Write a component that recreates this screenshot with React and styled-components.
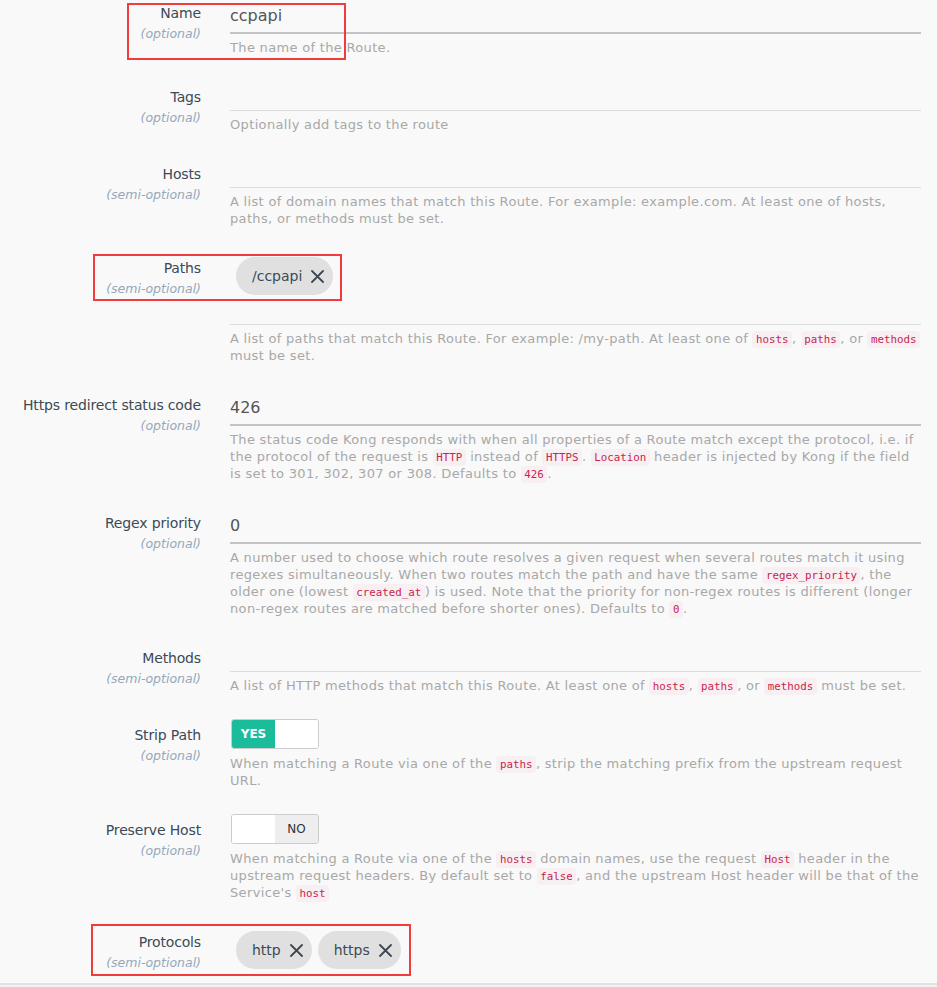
import styled, { createGlobalStyle } from "styled-components";

const GlobalStyle = createGlobalStyle`
  body {
    margin: 0;
    background: #f1f1f1;
    font-family: "DejaVu Sans", "Open Sans", sans-serif;
  }
`;

const Cross = () => (
  <svg width="13" height="13" viewBox="0 0 13 13">
    <path d="M1 1L12 12M12 1L1 12" stroke="#3d4852" strokeWidth="1.8" strokeLinecap="round" />
  </svg>
);

const App = () => {
  return (
    <>
      <GlobalStyle />
      <Panel>
        <Row>
          <LabelCol>
            <Label>Name</Label>
            <Hint>(optional)</Hint>
          </LabelCol>
          <Field>
            <TextValue>ccpapi</TextValue>
            <Help>The name of the Route.</Help>
          </Field>
          <Highlight $left={127} $top={0} $width={219} $height={57} />
        </Row>

        <Row>
          <LabelCol>
            <Label>Tags</Label>
            <Hint>(optional)</Hint>
          </LabelCol>
          <Field>
            <TagLine />
            <Help>Optionally add tags to the route</Help>
          </Field>
        </Row>

        <Row>
          <LabelCol>
            <Label>Hosts</Label>
            <Hint>(semi-optional)</Hint>
          </LabelCol>
          <Field>
            <TagLine />
            <Help>
              A list of domain names that match this Route. For example: example.com. At least one of hosts,
              paths, or methods must be set.
            </Help>
          </Field>
        </Row>

        <Row>
          <LabelCol>
            <Label>Paths</Label>
            <Hint>(semi-optional)</Hint>
          </LabelCol>
          <Field>
            <Chips>
              <Chip>
                /ccpapi <Cross />
              </Chip>
            </Chips>
            <TagLine />
            <Help>
              A list of paths that match this Route. For example: /my-path. At least one of <Code>hosts</Code>,{" "}
              <Code>paths</Code>, or <Code>methods</Code> must be set.
            </Help>
          </Field>
          <Highlight $left={93} $top={-4} $width={249} $height={47} />
        </Row>

        <Row>
          <LabelCol>
            <Label>Https redirect status code</Label>
            <Hint>(optional)</Hint>
          </LabelCol>
          <Field>
            <TextValue>426</TextValue>
            <Help>
              The status code Kong responds with when all properties of a Route match except the protocol, i.e. if
              the protocol of the request is <Code>HTTP</Code> instead of <Code>HTTPS</Code>.{" "}
              <Code>Location</Code> header is injected by Kong if the field is set to 301, 302, 307 or 308.
              Defaults to <Code>426</Code>.
            </Help>
          </Field>
        </Row>

        <Row>
          <LabelCol>
            <Label>Regex priority</Label>
            <Hint>(optional)</Hint>
          </LabelCol>
          <Field>
            <TextValue>0</TextValue>
            <Help>
              A number used to choose which route resolves a given request when several routes match it using
              regexes simultaneously. When two routes match the path and have the same <Code>regex_priority</Code>,
              the older one (lowest <Code>created_at</Code>) is used. Note that the priority for non-regex routes is
              different (longer non-regex routes are matched before shorter ones). Defaults to <Code>0</Code>.
            </Help>
          </Field>
        </Row>

        <Row>
          <LabelCol>
            <Label>Methods</Label>
            <Hint>(semi-optional)</Hint>
          </LabelCol>
          <Field>
            <TagLine />
            <Help>
              A list of HTTP methods that match this Route. At least one of <Code>hosts</Code>,{" "}
              <Code>paths</Code>, or <Code>methods</Code> must be set.
            </Help>
          </Field>
        </Row>

        <Row>
          <LabelCol>
            <Label>Strip Path</Label>
            <Hint>(optional)</Hint>
          </LabelCol>
          <Field>
            <Toggle>
              <ToggleHalf $on>YES</ToggleHalf>
              <ToggleHalf />
            </Toggle>
            <Help>
              When matching a Route via one of the <Code>paths</Code>, strip the matching prefix from the upstream
              request URL.
            </Help>
          </Field>
        </Row>

        <Row>
          <LabelCol>
            <Label>Preserve Host</Label>
            <Hint>(optional)</Hint>
          </LabelCol>
          <Field>
            <Toggle>
              <ToggleHalf />
              <ToggleHalf $off>NO</ToggleHalf>
            </Toggle>
            <Help>
              When matching a Route via one of the <Code>hosts</Code> domain names, use the request{" "}
              <Code>Host</Code> header in the upstream request headers. By default set to <Code>false</Code>, and
              the upstream Host header will be that of the Service's <Code>host</Code>
            </Help>
          </Field>
        </Row>

        <Row>
          <LabelCol>
            <Label>Protocols</Label>
            <Hint>(semi-optional)</Hint>
          </LabelCol>
          <Field>
            <Chips>
              <Chip>
                http <Cross />
              </Chip>
              <Chip>
                https <Cross />
              </Chip>
            </Chips>
            <TagLine />
          </Field>
          <Highlight $left={91} $top={-8} $width={320} $height={52} />
        </Row>
      </Panel>
    </>
  );
};

export default App;

const Panel = styled.div`
  box-sizing: border-box;
  height: 985px;
  overflow: hidden;
  background: #f9f9f9;
  border-bottom: 2px solid #e2e2e2;
  padding: 3px 16px 0 0;
`;

const Row = styled.div`
  position: relative;
  display: grid;
  grid-template-columns: 201px 1fr;
  column-gap: 29px;
  margin-bottom: 31px;
`;

const LabelCol = styled.div`
  text-align: right;
`;

const Label = styled.div`
  font-size: 14px;
  line-height: 20px;
  letter-spacing: -0.15px;
  color: #3b4a56;
`;

const Hint = styled.div`
  font-size: 12.5px;
  line-height: 22px;
  font-style: italic;
  color: #94a8ba;
`;

const Field = styled.div`
  display: flex;
  flex-direction: column;
  min-width: 0;
`;

const TextValue = styled.div`
  box-sizing: border-box;
  height: 31px;
  line-height: 26px;
  font-size: 16px;
  color: #555;
  border-bottom: 2px solid #c4c4c4;
`;

const TagLine = styled.div`
  height: 24px;
  box-sizing: border-box;
  border-bottom: 1px solid #dcdcdc;
`;

const Chips = styled.div`
  display: flex;
  gap: 6px;
  padding-left: 6px;
  margin: -1px 0 6px;
`;

const Chip = styled.span`
  display: inline-flex;
  align-items: center;
  gap: 9px;
  height: 38px;
  padding: 0 9px 0 16px;
  border-radius: 19px;
  background: #e0e0e0;
  font-size: 14px;
  color: #3b4a56;
`;

const Help = styled.div`
  margin-top: 5px;
  font-size: 13px;
  line-height: 17px;
  letter-spacing: 0.35px;
  word-spacing: -0.15px;
  color: #a8a8a8;
`;

const Code = styled.code`
  font-family: "DejaVu Sans Mono", "Liberation Mono", monospace;
  font-size: 10.8px;
  line-height: 1;
  letter-spacing: 0;
  word-spacing: 0;
  color: #c7254e;
  background: #f7eff2;
  padding: 2px 3.5px;
  border-radius: 4px;
`;

const Toggle = styled.div`
  display: flex;
  width: 88px;
  height: 30px;
  margin: -6px 0 1px 1px;
  box-sizing: border-box;
  border: 1px solid #cccccc;
  border-radius: 3px;
  overflow: hidden;
  background: #fff;
`;

const ToggleHalf = styled.div`
  flex: 1;
  display: flex;
  align-items: center;
  justify-content: center;
  font-size: 12px;
  font-weight: ${(p) => (p.$on ? 700 : 400)};
  color: ${(p) => (p.$on ? "#fff" : "#333")};
  background: ${(p) => (p.$on ? "#1abc9c" : p.$off ? "#eeeeee" : "#fff")};
`;

const Highlight = styled.div`
  position: absolute;
  left: ${(p) => p.$left}px;
  top: ${(p) => p.$top}px;
  width: ${(p) => p.$width}px;
  height: ${(p) => p.$height}px;
  box-sizing: border-box;
  border: 2px solid #f03c3c;
  pointer-events: none;
`;
